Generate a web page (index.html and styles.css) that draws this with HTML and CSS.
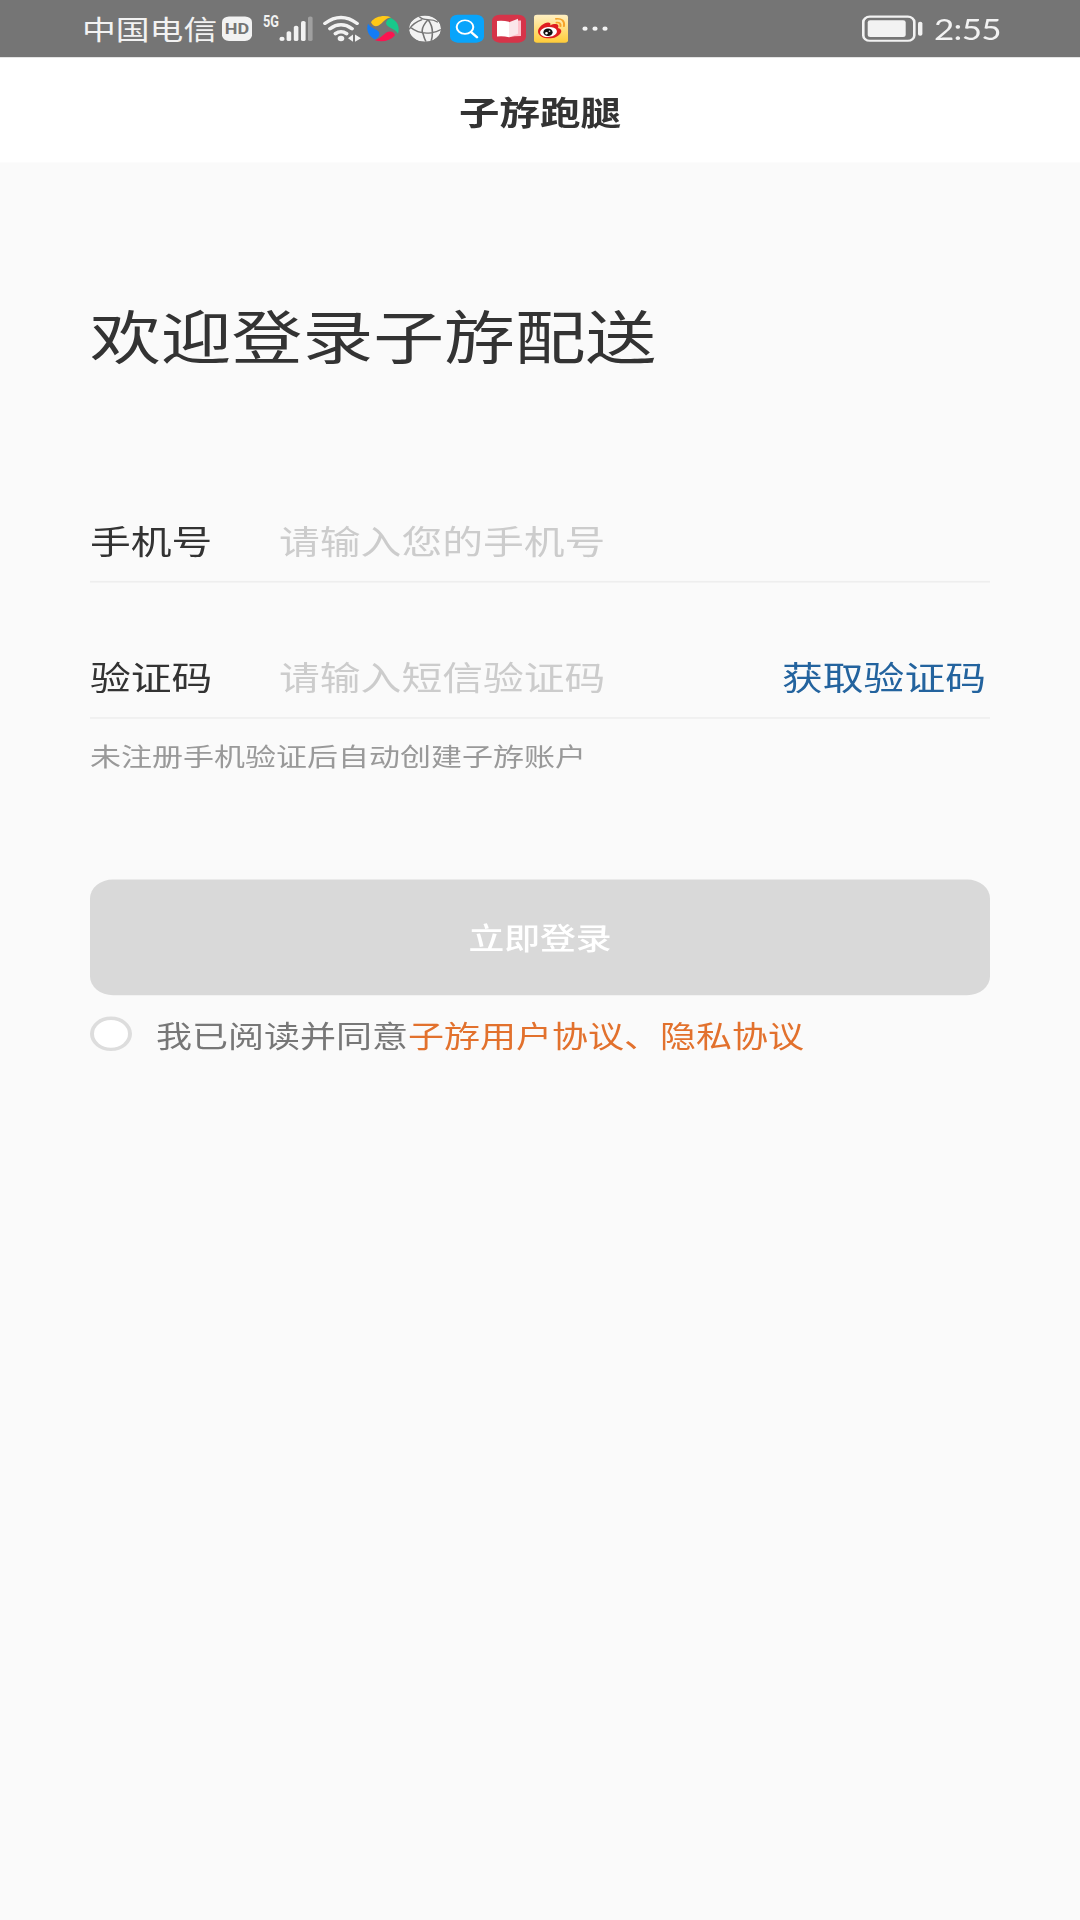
FILE: index.html
```html
<!DOCTYPE html>
<html lang="zh-CN">
<head>
  <meta charset="UTF-8">
  <meta name="viewport" content="width=device-width, initial-scale=1.0">
  <title>子斿跑腿</title>
  <link rel="stylesheet" href="styles.css">
</head>
<body>
  <div class="screen">

    <div class="status-bar">
      <span class="carrier">中国电信</span>
      <span class="hd">HD</span>
      <svg class="signal" width="50" height="34" viewBox="0 0 50 34">
        <text x="0" y="15" textLength="16" lengthAdjust="spacingAndGlyphs">5G</text>
        <circle cx="19" cy="29.5" r="2.6"/>
        <rect x="23.6" y="20" width="4.6" height="12" rx="2"/>
        <rect x="30.8" y="13.5" width="4.6" height="18.5" rx="2"/>
        <rect x="38" y="7.5" width="4.6" height="24.5" rx="2"/>
        <rect class="weak" x="45" y="2" width="4.6" height="30" rx="2"/>
      </svg>
      <svg class="wifi" width="38" height="34" viewBox="0 0 38 34">
        <path d="M2 10.5Q18 -4 34 10.5M7 17Q18 7.5 29 17M12.5 23Q18 18.5 23.5 23"/>
        <circle cx="18" cy="29" r="3.3"/>
        <path class="arrows" d="M30 24v9l-5-4.5zM32 24v9l6-4.5z"/>
      </svg>
      <svg class="ball" width="32" height="32" viewBox="0 0 32 32">
        <path fill="#ffc917" d="M4 8C8 1 17-1 24 2C19 3 17 7 13 11C10 14 6 14 4 8z"/>
        <path fill="#17c98b" d="M24 3C31 7 33 15 31 22C29 18 26 17 22 14C17 10 19 5 24 3z"/>
        <path fill="#fb1450" d="M28 24C23 31 15 33 8 30C13 28 15 25 19 21C23 18 27 19 28 24z"/>
        <path fill="#147cf5" d="M1 10C3 14 6 15 10 18C14 21 13 26 8 29C1 25-1 17 1 10z"/>
      </svg>
      <svg class="globe" width="32" height="32" viewBox="0 0 32 32">
        <circle cx="16" cy="16" r="16"/>
        <path d="M10 1Q13 5 19 5Q26 16 22 32M13 5Q4 9 0 17M19 5Q25 5 29 8M1 14Q10 23 22 21Q28 20 32 17M19 5Q11 16 14 22Q15 27 17 32"/>
      </svg>
      <svg class="app" width="34" height="34" viewBox="0 0 34 34">
        <rect width="34" height="34" rx="7.5" fill="#08a4fb"/>
        <circle cx="15" cy="15" r="8.3" fill="none" stroke="#fff" stroke-width="2"/>
        <path d="M21 21l6 6.5" stroke="#fff" stroke-width="2.6" stroke-linecap="round"/>
      </svg>
      <svg class="app" width="34" height="34" viewBox="0 0 34 34">
        <rect width="34" height="34" rx="7.5" fill="#d63449"/>
        <path fill="#fff" d="M5 7.5q6-1 12 1v19q-6-2-12-1z"/>
        <path fill="#ffc3cd" d="M25 7h4v19q-7 0-12 1.500z"/>
        <path fill="#fbe6ea" d="M17 9l9-4v18l-9 4.500z"/>
      </svg>
      <svg class="app" width="34" height="34" viewBox="0 0 34 34">
        <defs>
          <linearGradient id="weibo" x1="0" y1="0" x2="0" y2="1">
            <stop offset="0" stop-color="#fff0c3"/>
            <stop offset="1" stop-color="#ffcc38"/>
          </linearGradient>
        </defs>
        <rect width="34" height="34" rx="3" fill="url(#weibo)"/>
        <path fill="#df1d20" d="M4 20C4 14 13 7 16 10C17 11 16 13 16 13C21 10 26 11 24 16C30 18 27 24 22 27C15 31 4 28 4 20z"/>
        <ellipse cx="14.5" cy="21" rx="8.5" ry="6" fill="#fff" transform="rotate(-8 14.5 21)"/>
        <circle cx="14" cy="21.3" r="4.6" fill="#111"/>
        <circle cx="12.5" cy="22.5" r="1.4" fill="#fff"/>
        <circle cx="15.5" cy="20" r=".8" fill="#fff"/>
        <path d="M22 5Q31 4 30 14M22.5 9.5Q27 9 26.5 14" fill="none" stroke="#f5a32a" stroke-width="2" stroke-linecap="round"/>
      </svg>
      <svg class="more" width="26" height="6" viewBox="0 0 26 6">
        <circle cx="3" cy="3" r="2.6"/>
        <circle cx="13" cy="3" r="2.6"/>
        <circle cx="23" cy="3" r="2.6"/>
      </svg>
      <svg class="battery" width="61" height="32" viewBox="0 0 61 32">
        <rect class="case" x="1.3" y="1.3" width="51" height="29.4" rx="6.5"/>
        <rect x="5.7" y="5.8" width="38" height="20.4" rx="2.5"/>
        <rect x="56" y="7.5" width="4.4" height="17" rx="2"/>
      </svg>
      <span class="clock">2:55</span>
    </div>

    <div class="navbar">子斿跑腿</div>

    <div class="login">
      <h1 class="welcome">欢迎登录子斿配送</h1>

      <div class="field">
        <label class="label" for="phone">手机号</label>
        <input class="input" id="phone" type="tel" placeholder="请输入您的手机号">
      </div>

      <div class="field field-code">
        <label class="label" for="code">验证码</label>
        <input class="input" id="code" type="text" placeholder="请输入短信验证码">
        <span class="get-code">获取验证码</span>
      </div>

      <div class="tip">未注册手机验证后自动创建子斿账户</div>

      <button class="submit" type="button">立即登录</button>

      <div class="agree">
        <span class="radio"></span>
        <span class="agree-text">我已阅读并同意<span class="agree-link">子斿用户协议、隐私协议</span></span>
      </div>
    </div>

  </div>
</body>
</html>
```
FILE: styles.css
```css
* {
  box-sizing: border-box;
}

body {
  margin: 0;
  height: 1920px;
  background-color: #fafafa;
  color: #333;
  font-family: "Noto Sans CJK SC", sans-serif;
}

/* 1080x2340 的手机屏幕压缩到 1920 高 */
.screen {
  width: 1080px;
  transform: scaleY(0.8205);
  transform-origin: 0 0;
}

.status-bar {
  display: flex;
  align-items: center;
  height: 70px;
  padding: 0 80px 0 82px;
  background-color: #757575;
  color: #f2f2f2;
}

.status-bar svg {
  flex: none;
  fill: #f2f2f2;
  overflow: visible;
}

.carrier {
  width: 140px;
  font-size: 33.8px;
  line-height: 70px;
  white-space: nowrap;
}

.hd {
  width: 30px;
  height: 30px;
  border-radius: 7px;
  background-color: #f2f2f2;
  color: #757575;
  font-family: Roboto, sans-serif;
  font-size: 18px;
  font-weight: bold;
  line-height: 30px;
  text-align: center;
}

.signal {
  margin-left: 11px;
  font-family: Roboto, sans-serif;
  font-size: 19px;
  font-weight: bold;
}

.signal .weak {
  fill: #a0a0a0;
}

.wifi {
  margin-left: 10px;
}

.wifi path {
  fill: none;
  stroke: #f2f2f2;
  stroke-width: 4;
  stroke-linecap: round;
}

.wifi .arrows {
  fill: #f2f2f2;
  stroke: none;
}

.ball {
  margin-left: 6px;
}

.status-bar .globe {
  margin-left: 10px;
  border-radius: 50%;
  overflow: hidden;
}

.globe path {
  fill: none;
  stroke: #757575;
  stroke-width: 1.6;
}

.app {
  margin-left: 8px;
}

.globe + .app {
  margin-left: 9px;
}

.more {
  margin-left: 14px;
}

.battery {
  margin-left: auto;
}

.battery .case {
  fill: none;
  stroke: #f2f2f2;
  stroke-width: 2.6;
}

.clock {
  width: 66px;
  margin-left: 11px;
  font-family: Lato, sans-serif;
  font-size: 35px;
  letter-spacing: -0.7px;
  line-height: 72px;
}

.navbar {
  height: 128px;
  background-color: #fff;
  font-size: 40.5px;
  font-weight: bold;
  line-height: 129px;
  text-align: center;
}

.login {
  padding: 0 90px;
}

.welcome {
  margin: 0;
  padding-top: 159px;
  font-size: 70.8px;
  font-weight: 400;
  line-height: 100px;
}

.field {
  display: flex;
  align-items: center;
  height: 98px;
  margin-top: 155px;
  padding-bottom: 6px;
  border-bottom: 2px solid #eee;
  font-size: 40.8px;
}

.field-code {
  margin-top: 68px;
}

.label {
  width: 189px;
}

.input {
  flex: 1;
  min-width: 0;
  height: 90px;
  padding: 0;
  border: none;
  outline: none;
  background: none;
  color: #333;
  font: inherit;
}

.input::placeholder {
  color: #ccc;
}

.get-code {
  margin-right: 4px;
  color: #23639e;
}

.tip {
  margin-top: 22px;
  color: #999;
  font-size: 31px;
  line-height: 46px;
}

.submit {
  display: block;
  width: 100%;
  height: 141px;
  margin-top: 128px;
  padding: 0 0 4px;
  border: none;
  border-radius: 23px;
  background-color: #d9d9d9;
  color: #fff;
  font-family: inherit;
  font-size: 35.8px;
  font-weight: 500;
}

.agree {
  display: flex;
  align-items: center;
  margin-top: 20px;
  font-size: 36px;
  line-height: 54px;
}

.radio {
  width: 42px;
  height: 42px;
  margin-right: 24px;
  border: 4px solid #ddd;
  border-radius: 50%;
  background-color: #fff;
}

.agree-text {
  color: #777;
}

.agree-link {
  color: #e2712d;
}
```
